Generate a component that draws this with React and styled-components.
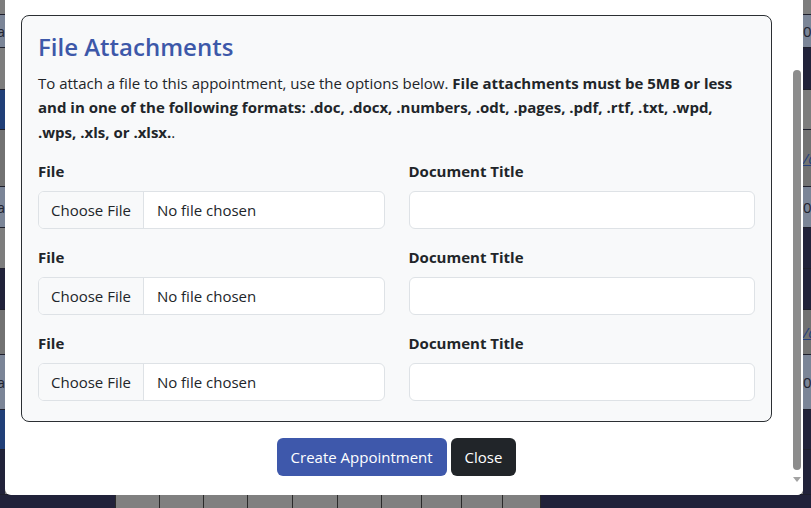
import styled, { createGlobalStyle } from "styled-components";

const GlobalStyle = createGlobalStyle`
  html, body {
    margin: 0;
    padding: 0;
    width: 811px;
    height: 508px;
    overflow: hidden;
    background: #21223a;
  }
  body {
    font-family: "Open Sans", "Noto Sans", sans-serif;
    color: #212529;
  }
  * { box-sizing: border-box; }
`;

// rows of the calendar behind the dimmed backdrop
const rows = [
  { h: 15, left: "gray", right: "gray" },
  { h: 33, left: "slate", right: "slate", lt: "a", rt: "0" },
  { h: 42, left: "gray", right: "navy" },
  { h: 40, left: "blue", right: "gray" },
  { h: 57, left: "dark", right: "dark", rt: "/a", link: true },
  { h: 41, left: "slate", right: "slate", lt: "a", rt: "0" },
  { h: 41, left: "gray", right: "navy" },
  { h: 41, left: "navy", right: "navy" },
  { h: 45, left: "dark", right: "dark", rt: "/a", link: true },
  { h: 55, left: "slate", right: "slate", lt: "a", rt: "0" },
  { h: 40, left: "blue", right: "navy" },
  { h: 45, left: "navy", right: "navy" },
];

const cellColors = {
  gray: "#7d7d7d",
  dark: "#727272",
  slate: "#7b8597",
  blue: "#213f78",
  navy: "#21223a",
};

const bottomCells = [44, 44, 44, 45, 45, 44, 40, 40, 41, 39];

const attachments = [1, 2, 3];

export default function App() {
  return (
    <>
      <GlobalStyle />
      <Backdrop>
        {rows.map((r, i) => (
          <BackRow key={i} style={{ height: r.h }}>
            <SideCell $tone={r.left} $align="right">
              {r.lt}
            </SideCell>
            <MiddleCell />
            <SideCell $tone={r.right} $align="left" $link={r.link}>
              {r.rt}
            </SideCell>
          </BackRow>
        ))}
        <BottomRow>
          <BottomSpacer />
          {bottomCells.map((w, i) => (
            <DayCell key={i} style={{ width: w }} />
          ))}
        </BottomRow>
      </Backdrop>

      <Modal>
        <ModalContent>
          <Card>
            <Title>File Attachments</Title>
            <Intro>
              To attach a file to this appointment, use the options below.{" "}
              <strong>
                File attachments must be 5MB or less and in one of the following
                formats: .doc, .docx, .numbers, .odt, .pages, .pdf, .rtf, .txt,
                .wpd,
                <br />
                .wps, .xls, or .xlsx.
              </strong>
              .
            </Intro>
            {attachments.map((n) => (
              <FieldRow key={n}>
                <Field>
                  <Label>File</Label>
                  <FileBox>
                    <ChooseButton>Choose File</ChooseButton>
                    <FileName>No file chosen</FileName>
                  </FileBox>
                </Field>
                <Field>
                  <Label>Document Title</Label>
                  <TextInput type="text" />
                </Field>
              </FieldRow>
            ))}
          </Card>
          <Footer>
            <Button $variant="primary">Create Appointment</Button>
            <Button $variant="dark">Close</Button>
          </Footer>
        </ModalContent>
        <ScrollTrack>
          <ScrollThumb />
          <ScrollArrow />
        </ScrollTrack>
      </Modal>
    </>
  );
}

const Backdrop = styled.div`
  display: flex;
  flex-direction: column;
  width: 811px;
  height: 508px;
`;

const BackRow = styled.div`
  display: grid;
  grid-template-columns: 5px 1fr 8px;
  border-bottom: 1px solid #1e1f2c;
`;

const SideCell = styled.div`
  background: ${(p) => cellColors[p.$tone]};
  overflow: hidden;
  display: flex;
  align-items: center;
  justify-content: ${(p) => (p.$align === "right" ? "flex-end" : "flex-start")};
  font-family: "Open Sans", sans-serif;
  font-size: 15px;
  color: ${(p) => (p.$link ? "#27407a" : "#1f2330")};
  text-decoration: ${(p) => (p.$link ? "underline" : "none")};
  font-style: ${(p) => (p.$link ? "italic" : "normal")};
  white-space: nowrap;
`;

const MiddleCell = styled.div`
  background: #7d7d7d;
`;

const BottomRow = styled.div`
  flex: 1;
  display: flex;
  background: #21223a;
`;

const BottomSpacer = styled.div`
  width: 115px;
`;

const DayCell = styled.div`
  background: #808080;
  border-left: 1px solid #2a2a2a;
  &:last-child {
    border-right: 1px solid #2a2a2a;
  }
`;

const Modal = styled.div`
  position: absolute;
  left: 5px;
  top: 0;
  width: 798px;
  height: 495px;
  background: #fff;
  border-radius: 0 0 6px 6px;
  display: flex;
  overflow: hidden;
`;

const ModalContent = styled.div`
  flex: 1;
  display: flex;
  flex-direction: column;
  padding: 15px 18px 0 16px;
`;

const Card = styled.div`
  background: #f8f9fa;
  border: 1px solid #2b2f33;
  border-radius: 8px;
  padding: 17px 16px 4px;
`;

const Title = styled.h3`
  margin: 0 0 9px;
  font-size: 24px;
  font-weight: 600;
  line-height: 1.2;
  color: #3d58a9;
`;

const Intro = styled.p`
  margin: 0 0 15px;
  font-size: 15px;
  line-height: 24.5px;

  strong {
    font-weight: 700;
  }
`;

const FieldRow = styled.div`
  display: grid;
  grid-template-columns: 1fr 1fr;
  gap: 24px;
  margin-bottom: 16px;
`;

const Field = styled.div`
  display: flex;
  flex-direction: column;
`;

const Label = styled.label`
  font-size: 15px;
  font-weight: 700;
  line-height: 24px;
  margin-bottom: 8px;
`;

const FileBox = styled.div`
  display: flex;
  height: 38px;
  border: 1px solid #dee2e6;
  border-radius: 6px;
  background: #fff;
  overflow: hidden;
  font-size: 15px;
`;

const ChooseButton = styled.span`
  display: flex;
  align-items: center;
  padding: 0 12px;
  background: #f8f9fa;
  border-right: 1px solid #dee2e6;
  color: #212529;
`;

const FileName = styled.span`
  display: flex;
  align-items: center;
  padding: 0 13px;
  color: #212529;
`;

const TextInput = styled.input`
  height: 38px;
  border: 1px solid #dee2e6;
  border-radius: 6px;
  background: #fff;
  padding: 6px 12px;
  font: inherit;
  font-size: 15px;
  outline: none;
`;

const Footer = styled.div`
  display: flex;
  justify-content: center;
  gap: 4px;
  padding-top: 16px;
`;

const Button = styled.button`
  height: 38px;
  padding: 0 14px;
  border: none;
  border-radius: 6px;
  font-family: inherit;
  font-size: 15px;
  color: #fff;
  background: ${(p) => (p.$variant === "primary" ? "#3e58ab" : "#212529")};
  cursor: pointer;
`;

const ScrollTrack = styled.div`
  width: 13px;
  display: flex;
  flex-direction: column;
  align-items: center;
  padding: 70px 0 12px;
  background: #fff;
`;

const ScrollThumb = styled.div`
  width: 8px;
  height: 400px;
  border-radius: 4px;
  background: #8c8c8c;
`;

const ScrollArrow = styled.div`
  margin-top: 7px;
  width: 0;
  height: 0;
  border-left: 4px solid transparent;
  border-right: 4px solid transparent;
  border-top: 5px solid #a3a3a3;
`;
